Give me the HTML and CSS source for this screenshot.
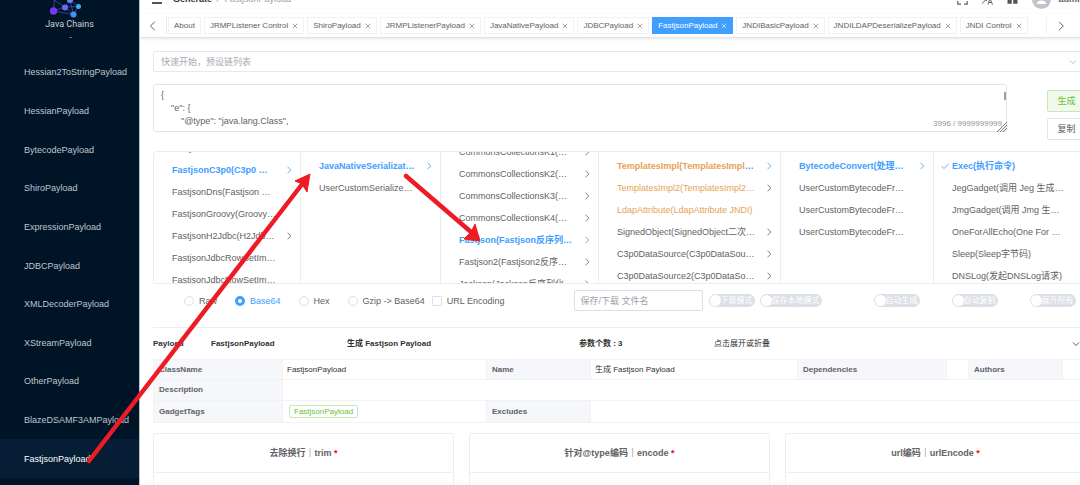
FILE: index.html
```
<!DOCTYPE html>
<html lang="en">
<head>
  <meta charset="UTF-8">
  <title>Java Chains</title>
  <link rel="stylesheet" href="styles.css">
</head>
<body>

  <svg class="symbols" aria-hidden="true">
    <symbol id="right" viewBox="0 0 8 8"><path d="M2.5 .7 5.8 4 2.5 7.3"/></symbol>
    <symbol id="left" viewBox="0 0 8 8"><path d="M5.5 .5 2 4l3.5 3.5"/></symbol>
    <symbol id="down" viewBox="0 0 8 8"><path d="M1 2.5 4 5.5 7 2.5"/></symbol>
    <symbol id="check" viewBox="0 0 8 8"><path d="M.6 4.2 3 6.6 7.5 1.9"/></symbol>
    <symbol id="close" viewBox="0 0 8 8"><path d="M1 1 7 7M7 1 1 7"/></symbol>
  </svg>

  <div class="app">
    <aside class="sidebar">
      <div class="logo">
        <svg width="40" height="19" viewBox="54 0 40 19">
          <path d="M57.5 11 58.5-1M57.5 11l11.500-4M57.5 11l20 3.500M69 7l5-7M69 7l8.500 7.500M69 7l13.500-.5M58 0l11 7M74 0l8.500 6.500M74 0l3.500 14.500M82.500 6.500l-5 8" stroke="#4b55b8" stroke-width=".7" fill="none"/>
          <circle cx="57.500" cy="11" r="3.700" fill="#7a35f5"/>
          <circle cx="69" cy="7.500" r="3" fill="#6a6af8"/>
          <circle cx="74" cy="0" r="3" fill="#6a82fa"/>
          <circle cx="82.500" cy="6.500" r="2.500" fill="#3fa9f5"/>
          <circle cx="77.500" cy="14.500" r="3" fill="#4590f6"/>
        </svg>
        <span>Java Chains</span>
        <small>-</small>
      </div>
      <nav class="menu">
        <a href="#">Hessian2ToStringPayload</a>
        <a href="#">HessianPayload</a>
        <a href="#">BytecodePayload</a>
        <a href="#">ShiroPayload</a>
        <a href="#">ExpressionPayload</a>
        <a href="#">JDBCPayload</a>
        <a href="#">XMLDecoderPayload</a>
        <a href="#">XStreamPayload</a>
        <a href="#">OtherPayload</a>
        <a href="#">BlazeDSAMF3AMPayload</a>
        <a href="#" class="active">FastjsonPayload</a>
      </nav>
    </aside>

    <main class="main">
      <header class="topbar">
        <button class="icon-btn" aria-label="Collapse menu">
          <svg width="10" height="10" viewBox="0 0 10 10"><path d="M0 1h10M0 5h10M0 9h10" stroke="#555" stroke-width="1.800"/></svg>
        </button>
        <div class="breadcrumb"><b>Generate</b><i>/</i><span>FastjsonPayload</span></div>
        <div class="tools">
          <button class="icon-btn" aria-label="Full screen">
            <svg width="11" height="11" viewBox="0 0 11 11"><path d="M4 .8H.8V4M7 .8h3.200V4M4 10.200H.8V7M7 10.200h3.200V7" fill="none" stroke="#606266" stroke-width="1.200"/></svg>
          </button>
          <button class="icon-btn" aria-label="Language">
            <svg width="11" height="11" viewBox="0 0 11 11"><path d="M0 2h6M3 0v2M5 2Q4 7 0 9.500M1 3q1 3 4 4M6 10.500 8 4.500 10.500 10.500M6.800 8.500h3" fill="none" stroke="#606266"/></svg>
          </button>
          <button class="icon-btn" aria-label="Layout">
            <svg width="11" height="10" viewBox="0 0 11 10"><path d="M.5 0h4.300v4.300H.5zM6.200 0h4.300v4.300H6.200zM.5 5.500h4.300v4.300H.5zM6.200 5.500h4.300v4.300H6.200z" fill="#555"/></svg>
          </button>
          <span class="user">
            <svg width="19" height="19" viewBox="0 0 19 19"><circle cx="9.500" cy="9.500" r="9.500" fill="#c0c4cc"/><circle cx="9.500" cy="7" r="3" fill="#fff"/><path d="M5 14q0-3.500 4.500-3.500T14 14z" fill="#fff"/></svg>
            <b>admin</b>
          </span>
        </div>
      </header>

      <div class="tabs">
        <button class="scroll prev" aria-label="Previous tabs"><svg class="ico"><use href="#left"/></svg></button>
        <div class="tab-list">
          <button class="tab">About</button>
          <button class="tab">JRMPListener Control<svg class="x"><use href="#close"/></svg></button>
          <button class="tab">ShiroPayload<svg class="x"><use href="#close"/></svg></button>
          <button class="tab">JRMPListenerPayload<svg class="x"><use href="#close"/></svg></button>
          <button class="tab">JavaNativePayload<svg class="x"><use href="#close"/></svg></button>
          <button class="tab">JDBCPayload<svg class="x"><use href="#close"/></svg></button>
          <button class="tab active">FastjsonPayload<svg class="x"><use href="#close"/></svg></button>
          <button class="tab">JNDIBasicPayload<svg class="x"><use href="#close"/></svg></button>
          <button class="tab">JNDILDAPDeserializePayload<svg class="x"><use href="#close"/></svg></button>
          <button class="tab">JNDI Control<svg class="x"><use href="#close"/></svg></button>
        </div>
        <button class="scroll next" aria-label="Next tabs"><svg class="ico"><use href="#right"/></svg></button>
      </div>

      <div class="content">
        <div class="preset">
          <select aria-label="Preset chains">
            <option>快速开始，预设链列表</option>
          </select>
          <svg class="ico"><use href="#down"/></svg>
        </div>

        <div class="result">
          <div class="output">
            <textarea aria-label="Result">{
    "e": {
        "@type": "java.lang.Class",</textarea>
            <span class="thumb"></span>
            <span class="count">3996 / 9999999999</span>
            <svg class="grip" width="10" height="10" viewBox="0 0 10 10"><path d="M0 10 10 0M3 10l7-7M6 10l4-4" stroke="#777"/></svg>
          </div>
          <div class="actions">
            <button class="btn success">生成</button>
            <button class="btn">复制</button>
          </div>
        </div>

        <div class="cascader">
          <ul class="scrolled-1">
            <li>FastjsonBcel</li>
            <li class="on">FastjsonC3p0(C3p0 …<svg class="ico"><use href="#right"/></svg></li>
            <li>FastjsonDns(Fastjson …</li>
            <li>FastjsonGroovy(Groovy…</li>
            <li>FastjsonH2Jdbc(H2Jdb…<svg class="ico"><use href="#right"/></svg></li>
            <li>FastjsonJdbcRowSetIm…</li>
            <li>FastjsonJdbcRowSetIm…</li>
          </ul>
          <ul>
            <li class="on">JavaNativeSerializat…<svg class="ico"><use href="#right"/></svg></li>
            <li>UserCustomSerialize…</li>
          </ul>
          <ul class="scrolled-2">
            <li>CommonsCollectionsK1(…<svg class="ico"><use href="#right"/></svg></li>
            <li>CommonsCollectionsK2(…<svg class="ico"><use href="#right"/></svg></li>
            <li>CommonsCollectionsK3(…<svg class="ico"><use href="#right"/></svg></li>
            <li>CommonsCollectionsK4(…<svg class="ico"><use href="#right"/></svg></li>
            <li class="on">Fastjson(Fastjson反序列…<svg class="ico"><use href="#right"/></svg></li>
            <li>Fastjson2(Fastjson2反序…<svg class="ico"><use href="#right"/></svg></li>
            <li>Jackson(Jackson反序列化<svg class="ico"><use href="#right"/></svg></li>
          </ul>
          <ul>
            <li class="on"><span class="warn">TemplatesImpl(TemplatesImpl</span>…<svg class="ico"><use href="#right"/></svg></li>
            <li><span class="warn">TemplatesImpl2(TemplatesImpl2…</span><svg class="ico"><use href="#right"/></svg></li>
            <li><span class="warn">LdapAttribute(LdapAttribute JNDI)</span></li>
            <li>SignedObject(SignedObject二次…<svg class="ico"><use href="#right"/></svg></li>
            <li>C3p0DataSource(C3p0DataSou…<svg class="ico"><use href="#right"/></svg></li>
            <li>C3p0DataSource2(C3p0DataSo…<svg class="ico"><use href="#right"/></svg></li>
          </ul>
          <ul>
            <li class="on">BytecodeConvert(处理…<svg class="ico"><use href="#right"/></svg></li>
            <li>UserCustomBytecodeFr…</li>
            <li>UserCustomBytecodeFr…</li>
            <li>UserCustomBytecodeFr…</li>
          </ul>
          <ul class="leaf">
            <li class="on"><svg class="ico tick"><use href="#check"/></svg>Exec(执行命令)</li>
            <li>JegGadget(调用 Jeg 生成…</li>
            <li>JmgGadget(调用 Jmg 生…</li>
            <li>OneForAllEcho(One For …</li>
            <li>Sleep(Sleep字节码)</li>
            <li>DNSLog(发起DNSLog请求)</li>
          </ul>
        </div>

        <div class="options">
          <div class="radios">
            <label><input type="radio" name="enc">Raw</label>
            <label><input type="radio" name="enc" checked>Base64</label>
            <label><input type="radio" name="enc">Hex</label>
            <label><input type="radio" name="enc">Gzip -&gt; Base64</label>
          </div>
          <label class="url"><input type="checkbox">URL Encoding</label>
          <input type="text" class="filename" placeholder="保存/下载 文件名" aria-label="File name">
          <div class="switches">
            <label class="switch"><input type="checkbox">下载模式</label>
            <label class="switch"><input type="checkbox">保存本地模式</label>
          </div>
          <div class="switches wide">
            <label class="switch"><input type="checkbox">自动生成</label>
            <label class="switch"><input type="checkbox">自动复制</label>
            <label class="switch"><input type="checkbox">展开所有</label>
          </div>
        </div>

        <button class="summary">
          <b>Payload</b>
          <b>FastjsonPayload</b>
          <b>生成 Fastjson Payload</b>
          <b>参数个数 : 3</b>
          <span>点击展开或折叠</span>
          <svg class="ico"><use href="#down"/></svg>
        </button>

        <table class="info">
          <colgroup>
            <col class="c1"><col class="c2"><col class="c3"><col class="c4"><col class="c5"><col class="c6"><col class="c7"><col>
          </colgroup>
          <tr class="r1">
            <th>ClassName</th><td>FastjsonPayload</td>
            <th>Name</th><td>生成 Fastjson Payload</td>
            <th>Dependencies</th><td></td>
            <th>Authors</th><td></td>
          </tr>
          <tr class="r2"><th>Description</th><td colspan="7"></td></tr>
          <tr class="r3">
            <th>GadgetTags</th><td><span class="tag">FastjsonPayload</span></td>
            <th>Excludes</th><td colspan="5"></td>
          </tr>
        </table>

        <div class="cards">
          <section class="card"><h3>去除换行｜trim <em>*</em></h3></section>
          <section class="card"><h3>针对@type编码｜encode <em>*</em></h3></section>
          <section class="card"><h3>url编码｜urlEncode <em>*</em></h3></section>
        </div>
      </div>
    </main>
  </div>

  <!-- red arrows drawn over the page -->
  <svg class="arrows" width="600" height="485" viewBox="0 0 600 485" aria-hidden="true">
    <path d="M89 461 303 183M406 176l65 56" stroke="#ed1c24" stroke-width="4.500" stroke-linecap="round"/>
    <path d="M310 174 295 181 302 184 307 192zM480 241 475 224 471 232 464 239z" fill="#ed1c24" stroke="#ed1c24"/>
  </svg>

</body>
</html>
```
FILE: styles.css
```
* {
  box-sizing: border-box;
}
body {
  margin: 0;
  font-family: "Liberation Sans", "Noto Sans CJK SC", sans-serif;
  font-size: 9px;
  line-height: 14px;
  color: #606266;
  background: #fff;
}
button, input, select, textarea {
  font: inherit;
  color: inherit;
  margin: 0;
}
button {
  border: none;
  background: none;
  padding: 0;
  cursor: pointer;
}
.symbols {
  display: none;
}
.ico, .x {
  width: 8px;
  height: 8px;
  fill: none;
  stroke: currentColor;
  stroke-width: .8;
  flex: none;
}
.app {
  display: flex;
  height: 100vh;
  overflow: hidden;
}

/* sidebar */
.sidebar {
  flex: none;
  width: 140px;
  display: flex;
  flex-direction: column;
  padding-bottom: 7px;
  background: #001428;
  border-right: 1px solid #b9c0c8;
}
.logo {
  height: 53px;
  display: flex;
  flex-direction: column;
  align-items: center;
  color: #c9d0d8;
}
.logo svg {
  flex: none;
}
.logo span {
  font-family: Roboto, sans-serif;
  font-size: 9px;
  line-height: 10px;
}
.logo small {
  padding-left: 2px;
  font-size: 8px;
  line-height: 16px;
}
.menu {
  flex: 1;
  display: flex;
  flex-direction: column;
}
.menu a {
  flex: 1;
  display: flex;
  align-items: center;
  padding-left: 24px;
  color: #bfc6cd;
  text-decoration: none;
}
.menu a.active {
  background: #051d35;
  color: #fff;
}

/* header */
.main {
  flex: 1;
  min-width: 0;
  overflow: hidden;
}
.topbar {
  height: 30px;
  margin: -16px 0 0;
  padding-left: 12px;
  display: flex;
  align-items: center;
}
.icon-btn {
  display: flex;
}
.breadcrumb {
  margin-left: 11px;
  color: #97a0ad;
}
.breadcrumb b {
  color: #303133;
}
.breadcrumb i {
  margin: 0 5px;
}
.tools {
  margin-left: auto;
  display: flex;
  align-items: center;
  gap: 14px;
}
.user {
  display: flex;
  align-items: center;
  gap: 7px;
  margin-right: -5px;
}
.tabs {
  display: flex;
  align-items: center;
  height: 24px;
  border-bottom: 1px solid #e0e2e6;
  box-shadow: 0 1px 3px rgba(0, 0, 0, .1);
}
.scroll {
  flex: none;
  width: 27px;
  height: 17px;
  display: flex;
  align-items: center;
  justify-content: center;
}
.scroll .ico {
  width: 10px;
  height: 10px;
}
.prev {
  border-right: 1px solid #e8eaee;
}
.next {
  width: 34px;
  padding-right: 6px;
  border-left: 1px solid #f0f1f4;
}
.tab-list {
  flex: 1;
  display: flex;
  gap: 3px;
  padding-left: 1px;
  overflow: hidden;
}
.tab {
  flex: none;
  height: 17px;
  display: flex;
  align-items: center;
  padding: 0 5px;
  border: 1px solid #f0f1f5;
  font-size: 8px;
  white-space: nowrap;
}
.tab .x {
  width: 6px;
  height: 6px;
  margin-left: 4px;
}
.tab.active {
  background: #409eff;
  border-color: #409eff;
  color: #fff;
}

/* the content runs a little past the right edge */
.content {
  margin: 13px -6px 0 13px;
}
.preset {
  position: relative;
}
.preset select {
  display: block;
  width: 100%;
  height: 21px;
  padding: 0 7px;
  appearance: none;
  background: #fff;
  border: 1px solid #e6e8ed;
  border-radius: 2px;
  color: #a8abb2;
}
.preset .ico {
  position: absolute;
  right: 9px;
  top: 7px;
  color: #a8abb2;
}
.result {
  display: flex;
  gap: 40px;
  margin-top: 12px;
}
.output {
  position: relative;
  flex: 1;
}
.output textarea {
  display: block;
  width: 100%;
  height: 48px;
  padding: 4px 7px;
  border: 1px solid #e2e4ea;
  border-radius: 3px;
  line-height: 13px;
  white-space: pre;
  overflow: hidden;
  resize: none;
}
.thumb {
  position: absolute;
  right: 1px;
  top: 8px;
  width: 2px;
  height: 8px;
  background: #a0a0a0;
}
.count {
  position: absolute;
  right: 5px;
  bottom: 1px;
  font-size: 8px;
  color: #909399;
}
.grip {
  position: absolute;
  right: 0;
  bottom: 0;
}
.actions {
  display: flex;
  flex-direction: column;
  gap: 6px;
  padding-top: 6px;
  margin-bottom: -8px;
}
.btn {
  width: 39px;
  height: 22px;
  border: 1px solid #e2e4ea;
  border-radius: 2px;
}
.btn.success {
  background: #f0f9eb;
  border-color: #c8e6b8;
  color: #67c23a;
}

/* chain columns */
.cascader {
  height: 133px;
  margin-top: 19px;
  display: grid;
  grid-template-columns: 147px 140px 158px 182px 153px 1fr;
  border: 1px solid #ebedf1;
  border-radius: 3px;
  overflow: hidden;
}
.cascader ul {
  min-width: 0;
  margin: 0;
  padding: 3px 0 0;
  list-style: none;
  border-right: 1px solid #ebedf1;
}
.cascader .scrolled-1 {
  margin-top: -18px;
}
.cascader .scrolled-2 {
  margin-top: -14px;
}
.cascader .leaf {
  border-right: none;
}
.cascader li {
  height: 22px;
  display: flex;
  align-items: center;
  padding: 0 7px 0 18px;
  white-space: nowrap;
}
.cascader .ico {
  margin-left: auto;
}
.cascader .on {
  color: #409eff;
  font-weight: bold;
}
.cascader .tick {
  margin: 0 3px 0 -11px;
}
.warn {
  color: #e6a255;
}

/* encoding options */
.options {
  display: flex;
  align-items: center;
  padding: 6px 0 16px 31px;
  white-space: nowrap;
}
.radios {
  display: flex;
  gap: 18px;
}
.options label {
  display: flex;
  align-items: center;
  gap: 5px;
}
.radios input, .url input {
  appearance: none;
  width: 10px;
  height: 10px;
  border: 1px solid #dcdfe6;
  border-radius: 50%;
}
.radios input:checked {
  border: 3px solid #409eff;
}
.radios label:has(:checked) {
  color: #409eff;
}
.options .url {
  margin-left: 7px;
}
.url input {
  border-radius: 1px;
}
.filename {
  width: 129px;
  height: 21px;
  margin: 0 6px 0 69px;
  padding: 0 6px;
  border: 1px solid #dcdfe6;
  border-radius: 2px;
}
.filename::placeholder {
  color: #a0a3aa;
}
.switches {
  display: flex;
  gap: 5px;
}
.switches.wide {
  margin-left: 52px;
  gap: 32px;
}
.options .switch {
  height: 13px;
  gap: 0;
  padding: 0 2px 0 1px;
  border-radius: 7px;
  background: #dcdfe6;
  color: #fff;
  font-size: 8px;
}
.switch input {
  appearance: none;
  width: 11px;
  height: 11px;
  border-radius: 50%;
  background: #fff;
}

/* payload details */
.summary {
  width: 100%;
  height: 32px;
  display: grid;
  grid-template-columns: 58px 136px 232px 135px 1fr 14px;
  align-items: center;
  border-top: 1px solid #ebeef5;
  color: #303133;
  font-size: 8px;
  text-align: left;
}
.info {
  width: 100%;
  table-layout: fixed;
  border-collapse: collapse;
  font-size: 8px;
}
.info th, .info td {
  padding: 0 5px;
  border: 1px solid #f0f2f6;
  text-align: left;
}
.info th {
  background: #f5f7fa;
}
.info td {
  padding-left: 4px;
  color: #303133;
}
.c1 { width: 129px; }
.c2 { width: 204px; }
.c3 { width: 104px; }
.c4 { width: 207px; }
.c5 { width: 149px; }
.c6 { width: 22px; }
.c7 { width: 94px; }
.r1 { height: 20px; }
.r2 { height: 21px; }
.r3 { height: 22px; }
.tag {
  display: block;
  width: max-content;
  height: 13px;
  margin-left: 2px;
  padding: 0 4px;
  border: 1px solid #c8e6b8;
  border-radius: 2px;
  line-height: 11px;
  color: #67c23a;
}
.cards {
  display: grid;
  grid-template-columns: repeat(3, 1fr);
  gap: 15px;
  margin-top: 10px;
}
.card {
  height: 120px;
  border: 1px solid #ebeef5;
  border-radius: 2px;
}
.card h3 {
  margin: 0;
  padding: 12px 0;
  border-bottom: 1px solid #ebeef5;
  font-size: 9px;
  text-align: center;
}
.card em {
  color: #f00;
  font-style: normal;
}

.arrows {
  position: absolute;
  left: 0;
  top: 0;
  pointer-events: none;
}
```
